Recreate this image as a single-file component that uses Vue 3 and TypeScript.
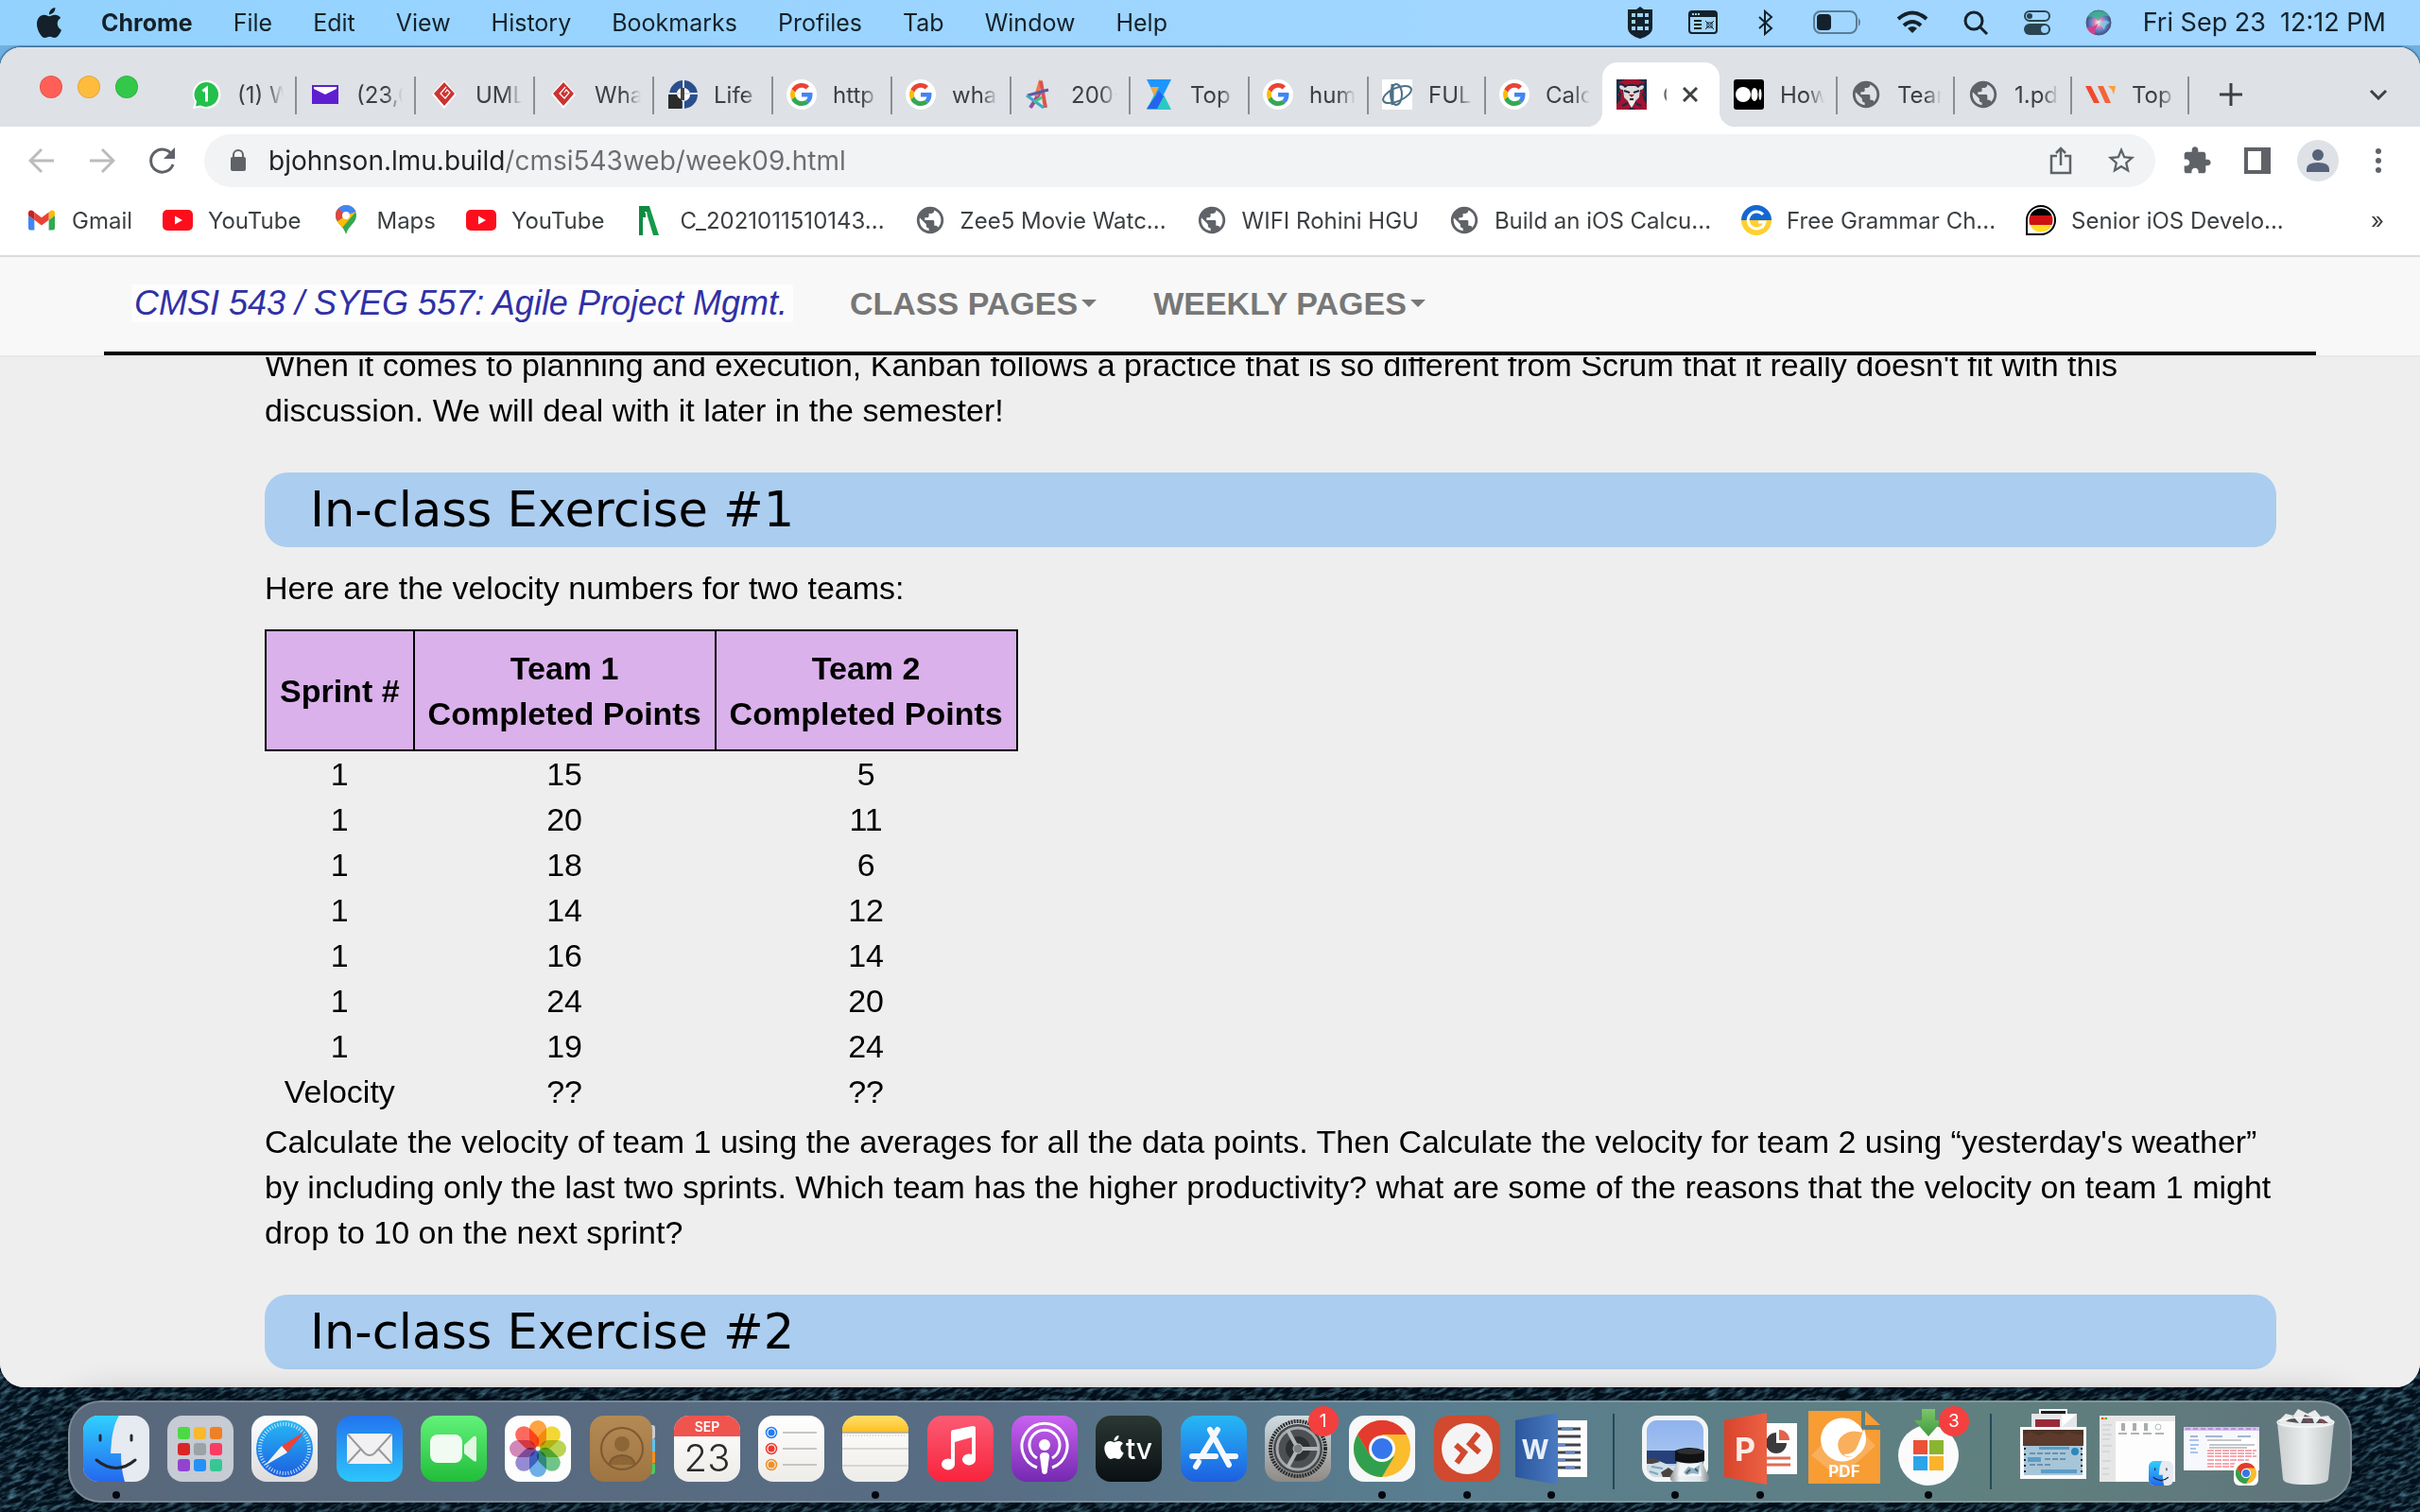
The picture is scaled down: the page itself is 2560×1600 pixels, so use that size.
<script setup lang="ts">
import { ref } from 'vue'

interface Tab { icon: string; title: string; narrow?: boolean; active?: boolean }
interface Bookmark { icon: string; label: string }
interface Glyph { text: string; x: number; y: number; size: number; weight: number; color: string }
interface DockItem { icon: string; name: string; running?: boolean; badge?: string; glyphs?: Glyph[] }

const menus: string[] = ['File', 'Edit', 'View', 'History', 'Bookmarks', 'Profiles', 'Tab', 'Window', 'Help']

const tabs: Tab[] = [
  { icon: 'whatsapp', title: '(1) W' },
  { icon: 'yahoo', title: '(23,0' },
  { icon: 'diamond', title: 'UML' },
  { icon: 'diamond', title: 'Wha' },
  { icon: 'life', title: 'Life' },
  { icon: 'google', title: 'http' },
  { icon: 'google', title: 'wha' },
  { icon: 'star-a', title: '200-' },
  { icon: 'hourglass', title: 'Top' },
  { icon: 'google', title: 'hum' },
  { icon: 'orbit', title: 'FUL', narrow: true },
  { icon: 'google', title: 'Calc', narrow: true },
  { icon: 'lion', title: 'C', narrow: true, active: true },
  { icon: 'medium', title: 'How', narrow: true },
  { icon: 'globe', title: 'Team', narrow: true },
  { icon: 'globe', title: '1.pdf', narrow: true },
  { icon: 'wstripes', title: 'Top', narrow: true },
]

const bookmarks: Bookmark[] = [
  { icon: 'gmail', label: 'Gmail' },
  { icon: 'youtube', label: 'YouTube' },
  { icon: 'maps', label: 'Maps' },
  { icon: 'youtube', label: 'YouTube' },
  { icon: 'n-green', label: 'C_2021011510143...' },
  { icon: 'globe', label: 'Zee5 Movie Watc...' },
  { icon: 'globe', label: 'WIFI Rohini HGU' },
  { icon: 'globe', label: 'Build an iOS Calcu...' },
  { icon: 'grammar', label: 'Free Grammar Ch...' },
  { icon: 'german', label: 'Senior iOS Develo...' },
]

const dockGroups: DockItem[][] = [
  [
    { icon: 'finder', name: 'Finder', running: true },
    { icon: 'launchpad', name: 'Launchpad' },
    { icon: 'safari', name: 'Safari' },
    { icon: 'mail', name: 'Mail' },
    { icon: 'facetime', name: 'FaceTime' },
    { icon: 'photos', name: 'Photos' },
    { icon: 'contacts', name: 'Contacts' },
    {
      icon: 'calendar',
      name: 'Calendar',
      glyphs: [
        { text: 'SEP', x: 35, y: 17, size: 14, weight: 600, color: '#fff' },
        { text: '23', x: 35, y: 59, size: 40, weight: 300, color: '#2a2a2a' },
      ],
    },
    { icon: 'reminders', name: 'Reminders' },
    { icon: 'notes', name: 'Notes', running: true },
    { icon: 'music', name: 'Music' },
    { icon: 'podcasts', name: 'Podcasts' },
    { icon: 'tv', name: 'TV', glyphs: [{ text: 'tv', x: 46, y: 46, size: 30, weight: 500, color: '#fff' }] },
    { icon: 'appstore', name: 'App Store' },
    { icon: 'settings', name: 'System Preferences', badge: '1' },
    { icon: 'chrome', name: 'Chrome', running: true },
    { icon: 'remote', name: 'Remote Desktop', running: true },
    { icon: 'word', name: 'Word', running: true, glyphs: [{ text: 'W', x: 18, y: 46, size: 28, weight: 700, color: '#e6effc' }] },
  ],
  [
    { icon: 'preview', name: 'Preview', running: true },
    { icon: 'powerpoint', name: 'PowerPoint', running: true, glyphs: [{ text: 'P', x: 19, y: 48, size: 34, weight: 700, color: '#fdebe5' }] },
    { icon: 'pdf', name: 'PDF Reader', glyphs: [{ text: 'PDF', x: 35, y: 65, size: 17, weight: 700, color: '#fff' }] },
    { icon: 'autoupdate', name: 'AutoUpdate', running: true, badge: '3' },
  ],
  [
    { icon: 'stack', name: 'Downloads' },
    { icon: 'win-finder', name: 'Finder window' },
    { icon: 'win-chrome', name: 'Chrome window' },
    { icon: 'trash', name: 'Trash' },
  ],
]

const velocities: [string, string, string][] = [
  ['1', '15', '5'],
  ['1', '20', '11'],
  ['1', '18', '6'],
  ['1', '14', '12'],
  ['1', '16', '14'],
  ['1', '24', '20'],
  ['1', '19', '24'],
  ['Velocity', '??', '??'],
]

const petals: { angle: number; color: string }[] = [
  { angle: 0, color: '#ff9a2e' },
  { angle: 45, color: '#f4d51e' },
  { angle: 90, color: '#b4d242' },
  { angle: 135, color: '#63c07c' },
  { angle: 180, color: '#5ea9e6' },
  { angle: 225, color: '#8a7fd0' },
  { angle: 270, color: '#d07bb4' },
  { angle: 315, color: '#ff5a4d' },
]

const address = ref('bjohnson.lmu.build/cmsi543web/week09.html')
</script>

<template>
  <div class="desktop">
    <svg class="wallpaper" aria-hidden="true">
      <defs>
        <filter id="water" x="0" y="0" width="100%" height="100%">
          <feTurbulence type="fractalNoise" baseFrequency="0.08 0.28" numOctaves="4" seed="7" />
          <feColorMatrix type="matrix" values="0 0 0 0 0.1  0 0 0 0 0.28  0 0 0 0 0.38  2 0 0 0 -0.85" />
        </filter>
      </defs>
      <g transform="rotate(-24 1280 1540)">
        <rect x="-200" y="600" width="3000" height="1800" filter="url(#water)" />
      </g>
    </svg>

    <svg class="symbols" aria-hidden="true">
      <defs>
        <linearGradient id="gBlue" x1="0" y1="0" x2="0" y2="1"><stop offset="0" stop-color="#2fd0ff" /><stop offset="1" stop-color="#2468ee" /></linearGradient>
        <linearGradient id="gMail" x1="0" y1="0" x2="0" y2="1"><stop offset="0" stop-color="#2374ee" /><stop offset="1" stop-color="#2cc6fb" /></linearGradient>
        <linearGradient id="gGreen" x1="0" y1="0" x2="0" y2="1"><stop offset="0" stop-color="#62f27a" /><stop offset="1" stop-color="#21bd3a" /></linearGradient>
        <linearGradient id="gWhite" x1="0" y1="0" x2="0" y2="1"><stop offset="0" stop-color="#ffffff" /><stop offset="1" stop-color="#dcdcdc" /></linearGradient>
        <linearGradient id="gPaper" x1="0" y1="0" x2="0" y2="1"><stop offset="0" stop-color="#ffffff" /><stop offset="1" stop-color="#eeece8" /></linearGradient>
        <linearGradient id="gBrown" x1="0" y1="0" x2="0" y2="1"><stop offset="0" stop-color="#b48a54" /><stop offset="1" stop-color="#9e7442" /></linearGradient>
        <linearGradient id="gRed" x1="0" y1="0" x2="0" y2="1"><stop offset="0" stop-color="#fb5b74" /><stop offset="1" stop-color="#f8243c" /></linearGradient>
        <linearGradient id="gPurple" x1="0" y1="0" x2="0" y2="1"><stop offset="0" stop-color="#c862f0" /><stop offset="1" stop-color="#7429b0" /></linearGradient>
        <linearGradient id="gDark" x1="0" y1="0" x2="0" y2="1"><stop offset="0" stop-color="#2a3833" /><stop offset="1" stop-color="#0b0f12" /></linearGradient>
        <linearGradient id="gStore" x1="0" y1="0" x2="0" y2="1"><stop offset="0" stop-color="#26b8f5" /><stop offset="1" stop-color="#1d5fe0" /></linearGradient>
        <linearGradient id="gGray" x1="0" y1="0" x2="0" y2="1"><stop offset="0" stop-color="#cfdde4" /><stop offset="1" stop-color="#8f8a86" /></linearGradient>
        <linearGradient id="gYellow" x1="0" y1="0" x2="0" y2="1"><stop offset="0" stop-color="#ffdf6a" /><stop offset="1" stop-color="#fdbf22" /></linearGradient>
        <linearGradient id="gWord" x1="0" y1="0" x2="1" y2="0"><stop offset="0" stop-color="#2a569c" /><stop offset="1" stop-color="#4a7ac0" /></linearGradient>
        <linearGradient id="gPpt" x1="0" y1="0" x2="1" y2="0"><stop offset="0" stop-color="#d9442b" /><stop offset="1" stop-color="#ec6144" /></linearGradient>
        <linearGradient id="gSky" x1="0" y1="0" x2="0" y2="1"><stop offset="0" stop-color="#8fb2ee" /><stop offset="1" stop-color="#b4d0f2" /></linearGradient>
        <linearGradient id="gTrash" x1="0" y1="0" x2="1" y2="0"><stop offset="0" stop-color="#cfd3d4" /><stop offset="0.5" stop-color="#f3f4f4" /><stop offset="1" stop-color="#c5cacb" /></linearGradient>
        <linearGradient id="gArrow" x1="0" y1="0" x2="0" y2="1"><stop offset="0" stop-color="#7cc66a" /><stop offset="1" stop-color="#3f9a3c" /></linearGradient>
        <linearGradient id="gJar" x1="0" y1="0" x2="1" y2="0"><stop offset="0" stop-color="#8d9396" /><stop offset="0.25" stop-color="#eef1f2" /><stop offset="0.75" stop-color="#dfe6ea" /><stop offset="1" stop-color="#7e8487" /></linearGradient>
        <radialGradient id="gSiri"><stop offset="0" stop-color="#ffffff" /><stop offset="0.35" stop-color="#e27fb4" /><stop offset="0.7" stop-color="#4f7fc4" /><stop offset="1" stop-color="#4a4a86" /></radialGradient>
      </defs>

      <!-- favicons, 32 units square -->
      <symbol id="globe" viewBox="0 0 32 32"><path transform="translate(-1 -1) scale(1.42)" fill="#5f6368" d="M12 2C6.480 2 2 6.480 2 12s4.480 10 10 10 10-4.480 10-10S17.520 2 12 2zm-1 17.930c-3.950-.490-7-3.850-7-7.930 0-.620.080-1.210.210-1.790L9 15v1c0 1.100.900 2 2 2v1.930zm6.900-2.540c-.260-.810-1-1.390-1.900-1.390h-1v-3c0-.550-.450-1-1-1H8v-2h2c.550 0 1-.450 1-1V7h2c1.100 0 2-.900 2-2v-.410c2.930 1.190 5 4.060 5 7.410 0 2.080-.800 3.970-2.100 5.390z" /></symbol>
      <symbol id="google" viewBox="0 0 32 32">
        <circle cx="16" cy="16" r="16" fill="#fff" />
        <g transform="translate(4 4) scale(0.5)">
          <path fill="#EA4335" d="M24 9.500c3.540 0 6.710 1.220 9.210 3.600l6.850-6.850C35.900 2.380 30.470 0 24 0 14.620 0 6.510 5.380 2.560 13.220l7.980 6.190C12.430 13.720 17.740 9.500 24 9.500z" />
          <path fill="#4285F4" d="M46.980 24.550c0-1.570-.150-3.090-.380-4.550H24v9.020h12.940c-.580 2.960-2.260 5.480-4.780 7.180l7.730 6c4.510-4.180 7.090-10.360 7.090-17.650z" />
          <path fill="#FBBC05" d="M10.530 28.590c-.480-1.450-.760-2.990-.760-4.590s.270-3.140.760-4.590l-7.980-6.190C.920 16.460 0 20.120 0 24c0 3.880.920 7.540 2.560 10.780l7.970-6.190z" />
          <path fill="#34A853" d="M24 48c6.480 0 11.930-2.130 15.890-5.810l-7.730-6c-2.150 1.450-4.920 2.300-8.160 2.300-6.260 0-11.570-4.220-13.470-9.910l-7.980 6.190C6.510 42.620 14.620 48 24 48z" />
        </g>
      </symbol>
      <symbol id="whatsapp" viewBox="0 0 32 32">
        <path d="M16 1a15 15 0 1 1-6 28.500L2 31l2-7A15 15 0 0 1 16 1z" fill="#fff" />
        <path d="M16 3a13 13 0 1 1-6 24.500L5 28.500l1-5A13 13 0 0 1 16 3z" fill="#23c04b" />
        <path d="M12.500 12.500l4-3v14" fill="none" stroke="#fff" stroke-width="3" />
      </symbol>
      <symbol id="yahoo" viewBox="0 0 32 32"><path d="M2 6h28v20H2z" fill="#5f1ed0" /><path d="M4 8h24v2l-6 3-6 3-6-3-6-3z" fill="#fff" /></symbol>
      <symbol id="diamond" viewBox="0 0 32 32">
        <path d="M16 1l13 15-13 15L3 16z" fill="#fff" />
        <path d="M16 3l11 12-11 14L5 15z" fill="#cc3333" />
        <path d="M18 8l-6 7 5 5 5-6-3-3-2 3M7 19l9 10 9-10" fill="none" stroke="#fff" stroke-width="1.200" />
      </symbol>
      <symbol id="life" viewBox="0 0 32 32">
        <circle cx="17" cy="16" r="11" fill="#fff" stroke="#2a4f8e" stroke-width="8" />
        <path d="M1 16h14v15H1z" fill="#2b2b2b" /><circle cx="16" cy="15" r="6" fill="#fff" />
        <path d="M17 0v32M0 15h32" stroke="#dee1e6" stroke-width="2" />
        <path d="M16 9v13" stroke="#444" stroke-width="4" />
      </symbol>
      <symbol id="star-a" viewBox="0 0 32 32">
        <path d="M6 30L16 14" stroke="#9a4ba0" stroke-width="4" /><path d="M12 18L17 1" stroke="#ee7a4b" stroke-width="4" />
        <path d="M17 2l5 28" stroke="#d9564c" stroke-width="4" /><path d="M3 17l22-6" stroke="#5b5aa8" stroke-width="3" />
        <path d="M2 17l18 13" stroke="#3aa9c9" stroke-width="3" /><path d="M10 24l8-5" stroke="#4bc47c" stroke-width="3" />
      </symbol>
      <symbol id="hourglass" viewBox="0 0 32 32">
        <path d="M3 0h26l-8 16H11z" fill="#1e96ff" /><path d="M7 8h9l-5 10z" fill="#f5a742" />
        <path d="M11 16h10l8 16H3z" fill="#2bc9c4" /><path d="M16 12l5 6-7 13H3z" fill="#2563ee" />
      </symbol>
      <symbol id="orbit" viewBox="0 0 32 32">
        <path d="M0 0h32v32H0z" fill="#fff" />
        <g fill="none" stroke="#4d7187" stroke-width="2"><ellipse cx="16" cy="16" rx="16" ry="7" transform="rotate(-24 16 16)" /><ellipse cx="15" cy="16" rx="6" ry="11" /><path d="M11 5v22" stroke-width="3" /></g>
      </symbol>
      <symbol id="lion" viewBox="0 0 32 32">
        <path d="M0 0h32v32H0z" fill="#14304a" />
        <path d="M2 3l8-3h12l8 3-4 5 5 8-3 4 4 6v6H20l-4-3-4 3H0v-6l5-5-4-5 4-8z" fill="#a3122f" />
        <path d="M0 10l4 6-2 6M32 10l-4 6 3 6M6 28l6-3M26 28l-6-3" fill="none" stroke="#14304a" stroke-width="2" />
        <path d="M3 5q3-2 6 1l7-1 7 1q3-3 6-1 2 4-3 5l-2 9-4 4-4 7-4-7-4-4-2-9Q1 9 3 5z" fill="#1a2740" />
        <path d="M3 7q3-2 6 2l3-2h8l3 2q3-4 6-2 0 4-4 4l-1 8-4 4h-8l-4-4-1-8Q3 11 3 7z" fill="#dedcda" />
        <path d="M8 12l6 2M24 12l-6 2M14 21h4" stroke="#1a2740" stroke-width="2" /><path d="M13 16h6l-3 3z" fill="#a3122f" /><path d="M12 23h8l-2 4-2 3-2-3z" fill="#f2f0ee" />
      </symbol>
      <symbol id="medium" viewBox="0 0 32 32"><rect width="32" height="32" rx="3" fill="#000" /><circle cx="10" cy="16" r="8" fill="#fff" /><ellipse cx="22" cy="16" rx="3.500" ry="7" fill="#fff" /><ellipse cx="28" cy="16" rx="1.500" ry="6" fill="#fff" /></symbol>
      <symbol id="wstripes" viewBox="0 0 32 32"><path d="M0 7h6l9 18H9z" fill="#ee4a2c" /><path d="M13 7h6l8 18h-6z" fill="#f2643a" /><path d="M24 7h8l-2 9-2-5z" fill="#f6a13c" /></symbol>
      <symbol id="gmail" viewBox="52 42 88 66">
        <path fill="#4285f4" d="M58 108h14V74L52 59v43c0 3.320 2.690 6 6 6" /><path fill="#34a853" d="M120 108h14c3.320 0 6-2.690 6-6V59l-20 15" />
        <path fill="#fbbc04" d="M120 48v26l20-15v-8c0-7.420-8.470-11.650-14.400-7.200" /><path fill="#ea4335" d="M72 74V48l24 18 24-18v26L96 92" />
        <path fill="#c5221f" d="M52 51v8l20 15V48l-5.600-4.200c-5.940-4.450-14.400-.220-14.400 7.200" />
      </symbol>
      <symbol id="youtube" viewBox="0 0 32 32"><rect y="5" width="32" height="22" rx="5" fill="#fe0d1c" /><path d="M13 11.500l8 4.500-8 4.500z" fill="#fff" /></symbol>
      <symbol id="maps" viewBox="0 0 32 32">
        <path d="M16 0c6 0 11 5 11 11 0 8-8 10-11 20C13 21 5 19 5 11 5 5 10 0 16 0z" fill="#34a853" />
        <path d="M16 0c5 0 9 3 10.500 7L12 24C8 19 5 17 5 11 5 5 10 0 16 0z" fill="#fbbc04" />
        <path d="M16 0c5 0 9 3 10.500 7L16 11l-9 6c-1.500-2-2-4-2-6C5 5 10 0 16 0z" fill="#4285f4" />
        <path d="M8 3.500L16 11l-9 6C5 14 4 8 8 3.500z" fill="#ea4335" /><circle cx="16" cy="11" r="4" fill="#fff" />
      </symbol>
      <symbol id="n-green" viewBox="0 0 32 32"><path d="M5 32V1h2l5 8v4H9v19z" fill="#118a43" /><path d="M12 1h4l10 31h-6L14 12z" fill="#159a4a" /><path d="M5 1h11v6H5z" fill="#118a43" /></symbol>
      <symbol id="grammar" viewBox="0 0 32 32"><path d="M0 16a16 16 0 0 1 32 0z" fill="#1268d3" /><path d="M0 16a16 16 0 0 0 32 0z" fill="#ffd02f" /><path d="M23 10a9 9 0 1 0 2 8h-7M22 24l3-6" fill="none" stroke="#fff" stroke-width="3" /></symbol>
      <symbol id="german" viewBox="0 0 32 32">
        <path d="M16 1a15 15 0 1 1 0 30H1V16A15 15 0 0 1 16 1z" fill="#fff" stroke="#000" stroke-width="2" />
        <path d="M4.500 11a12.500 12.500 0 0 1 23 0z" fill="#000" /><path d="M4.500 11h23q2 5 0 10h-23q-2-5 0-10z" fill="#cc1212" /><path d="M4.500 21a12.500 12.500 0 0 0 23 0z" fill="#ffdd22" />
      </symbol>

      <!-- dock icons, 70 units square -->
      <symbol id="finder" viewBox="0 0 70 70" overflow="visible">
        <rect width="70" height="70" rx="16" fill="#e6eaf1" />
        <path d="M16 0h22c-6 10-8 22-9 40h11c0 11 1 20 4 30H16A16 16 0 0 1 0 54V16A16 16 0 0 1 16 0z" fill="url(#gBlue)" />
        <path d="M18 21v5M51 21v5M14 47q21 17 41 0" fill="none" stroke="#22262e" stroke-width="3" stroke-linecap="round" />
      </symbol>
      <symbol id="launchpad" viewBox="0 0 70 70">
        <rect width="70" height="70" rx="16" fill="#c6cbd4" />
        <rect x="11" y="12" width="13" height="13" rx="3" fill="#4bd944" /><rect x="28" y="12" width="13" height="13" rx="3" fill="#f8b92c" /><rect x="45" y="12" width="13" height="13" rx="3" fill="#ef8024" />
        <rect x="11" y="29" width="13" height="13" rx="3" fill="#d92525" /><rect x="28" y="29" width="13" height="13" rx="3" fill="#9aa3a7" /><rect x="45" y="29" width="13" height="13" rx="3" fill="#fb3c62" />
        <rect x="11" y="46" width="13" height="13" rx="3" fill="#9243cf" /><rect x="28" y="46" width="13" height="13" rx="3" fill="#2590f5" /><rect x="45" y="46" width="13" height="13" rx="3" fill="#36c795" />
      </symbol>
      <symbol id="safari" viewBox="0 0 70 70">
        <rect width="70" height="70" rx="16" fill="url(#gWhite)" /><circle cx="35" cy="35" r="30" fill="url(#gStore)" />
        <circle cx="35" cy="35" r="26" fill="none" stroke="#cfe6fb" stroke-width="4" stroke-dasharray="1 2" />
        <path d="M56 17L38 39l-6-7z" fill="#ee4137" /><path d="M14 53l18-21 6 7z" fill="#f4f4f4" />
      </symbol>
      <symbol id="mail" viewBox="0 0 70 70">
        <rect width="70" height="70" rx="16" fill="url(#gMail)" /><rect x="11" y="19" width="48" height="32" rx="3" fill="#f1f1f2" />
        <path d="M12 20l18 20q5 4 10 0l18-20M12 50l14-15M58 50L44 35" fill="none" stroke="#97999d" stroke-width="2" />
      </symbol>
      <symbol id="facetime" viewBox="0 0 70 70"><rect width="70" height="70" rx="16" fill="url(#gGreen)" /><rect x="10" y="20" width="34" height="30" rx="8" fill="#f1fbf1" /><path d="M46 31l10-9q3-1 3 2v23q0 3-3 1l-10-8z" fill="#e2f6e3" /></symbol>
      <symbol id="contacts" viewBox="0 0 70 70">
        <rect x="54" y="10" width="15" height="15" rx="3" fill="#c9cdd0" /><rect x="54" y="25" width="15" height="14" fill="#5cc4f3" /><rect x="54" y="38" width="15" height="12" fill="#f68e1e" /><rect x="54" y="50" width="15" height="12" rx="3" fill="#45ce5c" />
        <rect width="66" height="70" rx="15" fill="url(#gBrown)" /><g fill="none" stroke="#7d5a30" stroke-width="2"><circle cx="34" cy="35" r="22" /><path d="M20 52q3-10 14-10t14 10" fill="#8c6636" /></g><circle cx="34" cy="30" r="8" fill="#8c6636" />
      </symbol>
      <symbol id="calendar" viewBox="0 0 70 70">
        <rect width="70" height="70" rx="16" fill="url(#gPaper)" /><path d="M0 22v-6A16 16 0 0 1 16 0h38a16 16 0 0 1 16 16v6z" fill="#f0544e" />
      </symbol>
      <symbol id="reminders" viewBox="0 0 70 70">
        <rect width="70" height="70" rx="16" fill="url(#gPaper)" /><path d="M26 18h36M26 35h36M26 52h36" stroke="#b7b7bb" stroke-width="1.500" />
        <g fill="none" stroke-width="1.500"><circle cx="14" cy="18" r="5.500" stroke="#1f7cf2" /><circle cx="14" cy="35" r="5.500" stroke="#ec3b30" /><circle cx="14" cy="52" r="5.500" stroke="#f0902a" /></g>
        <circle cx="14" cy="18" r="3.500" fill="#1f7cf2" /><circle cx="14" cy="35" r="3.500" fill="#ec3b30" /><circle cx="14" cy="52" r="3.500" fill="#f0902a" />
      </symbol>
      <symbol id="notes" viewBox="0 0 70 70">
        <rect width="70" height="70" rx="16" fill="url(#gPaper)" /><path d="M0 18v-2A16 16 0 0 1 16 0h38a16 16 0 0 1 16 16v2z" fill="url(#gYellow)" />
        <path d="M0 18h70" stroke="#a8a49a" stroke-width="1.500" /><path d="M2 21h66" stroke="#b5b3ae" stroke-width="1" stroke-dasharray="1 2" /><path d="M0 35h70M0 53h70" stroke="#cfcdc8" stroke-width="1.500" />
      </symbol>
      <symbol id="music" viewBox="0 0 70 70"><rect width="70" height="70" rx="16" fill="url(#gRed)" /><path d="M25 18q0-3 3-3l20-4q3 0 3 2v33a7 6 0 1 1-4-5V23l-18 5v23a7 6 0 1 1-4-5z" fill="#fff" /></symbol>
      <symbol id="podcasts" viewBox="0 0 70 70">
        <rect width="70" height="70" rx="16" fill="url(#gPurple)" /><g fill="none" stroke="#fff" stroke-width="3"><path d="M27 55a24 24 0 1 1 16 0" /><path d="M27 45a16 16 0 1 1 16 0" /></g>
        <circle cx="35" cy="31" r="6" fill="#fff" /><path d="M30 43q0-4 5-4t5 4l-2 15q0 4-3 4t-3-4z" fill="#fff" />
      </symbol>
      <symbol id="apple" viewBox="0 0 24 24"><path fill="currentColor" d="M12.152 6.896c-.948 0-2.415-1.078-3.960-1.040-2.040.027-3.910 1.183-4.961 3.014-2.117 3.675-.546 9.103 1.519 12.090 1.013 1.454 2.208 3.090 3.792 3.039 1.520-.065 2.090-.987 3.935-.987 1.831 0 2.350.987 3.960.948 1.637-.026 2.676-1.480 3.676-2.948 1.156-1.688 1.636-3.325 1.662-3.415-.039-.013-3.182-1.221-3.220-4.857-.026-3.040 2.480-4.494 2.597-4.559-1.429-2.090-3.623-2.324-4.390-2.376-2-.156-3.675 1.090-4.610 1.090zM15.530 3.830c.843-1.012 1.400-2.427 1.245-3.830-1.207.052-2.662.805-3.532 1.818-.780.896-1.454 2.338-1.273 3.714 1.338.104 2.715-.688 3.559-1.701" /></symbol>
      <symbol id="tv" viewBox="0 0 70 70">
        <rect width="70" height="70" rx="16" fill="url(#gDark)" /><g color="#fff"><use href="#apple" x="7" y="21" width="25" height="25" /></g>
      </symbol>
      <symbol id="appstore" viewBox="0 0 70 70"><rect width="70" height="70" rx="16" fill="url(#gStore)" /><path d="M39 15L22 43M31 15l20 37M12 43h25M47 43h11M19 49l-3 5" stroke="#f4f8fd" stroke-width="6" stroke-linecap="round" /></symbol>
      <symbol id="settings" viewBox="0 0 70 70">
        <rect width="70" height="70" rx="16" fill="url(#gGray)" /><circle cx="35" cy="35" r="29" fill="none" stroke="#2b2b2b" stroke-width="4" stroke-dasharray="2 1" /><circle cx="35" cy="35" r="26" fill="#44484b" />
        <circle cx="35" cy="35" r="22" fill="#4c5052" stroke="#a5a9ab" stroke-width="3" /><circle cx="35" cy="35" r="13" fill="#2e3133" />
        <path d="M35 35h22M35 35L24 15M35 35L24 55" stroke="#b0b4b6" stroke-width="4" /><circle cx="35" cy="35" r="5" fill="#7c8082" stroke="#c0c3c5" />
      </symbol>
      <symbol id="chrome-ball" viewBox="0 0 60 60">
        <circle cx="30" cy="30" r="30" fill="#fbbc2e" />
        <path d="M4 15a30 30 0 0 1 52 0H30L17 37z" fill="#e33b2e" />
        <path d="M4 15a30 30 0 0 0 26 45l13-22-13 5-13-6z" fill="#31a04e" />
        <circle cx="30" cy="30" r="14" fill="#fff" /><circle cx="30" cy="30" r="11" fill="#3577ea" />
      </symbol>
      <symbol id="chrome" viewBox="0 0 70 70"><rect width="70" height="70" rx="16" fill="#f6f7f8" /><use href="#chrome-ball" x="5" y="5" width="60" height="60" /></symbol>
      <symbol id="remote" viewBox="0 0 70 70"><rect width="70" height="70" rx="16" fill="#d1492e" /><circle cx="35" cy="35" r="27" fill="#f4f4f4" /><path d="M23 31l9 8-8 11M47 19l-9 11 10 9" fill="none" stroke="#d1492e" stroke-width="6" /></symbol>
      <symbol id="word" viewBox="0 0 70 70" overflow="visible">
        <rect x="36" y="5" width="37" height="60" fill="#fdfdfd" /><path d="M42 14h24M42 22h24M42 31h24M42 39h24M42 47h24M42 55h24" stroke="#3e434b" stroke-width="3" /><path d="M46 14h12M42 31h8M50 39h10M42 47h8M50 55h10" stroke="#6488c4" stroke-width="3" />
        <path d="M-3 5L42-3v76l-45-8z" fill="url(#gWord)" />
      </symbol>
      <symbol id="preview" viewBox="0 0 70 70" overflow="visible">
        <rect width="70" height="70" rx="16" fill="#f3f4f4" /><rect x="5" y="5" width="60" height="60" rx="11" fill="url(#gSky)" />
        <path d="M5 37h60v14H5z" fill="#27407a" /><path d="M5 46l13 2 12 5h35v2a10 10 0 0 1-10 10H16A11 11 0 0 1 5 54z" fill="#cfdde6" />
        <path d="M5 46l8-1 6 4-8 2H5zM20 60l8-5 8 6-6 4H22z" fill="#4a4440" /><path d="M10 54l12 2M8 59l9 3" stroke="#7fa6bf" stroke-width="2" />
        <path d="M37 47h27q1 8 7 17 1 6-4 6H34q-5 0-4-6 6-9 7-17z" fill="url(#gJar)" /><path d="M41 50h19l3 14H38z" fill="#f2f6f8" /><path d="M44 60l5-6 6 2 6-4-1 10-7-1-6 2z" fill="#8fb0c4" /><path d="M47 61l4-4M56 56l3 3" stroke="#4f5d66" stroke-width="2" />
        <path d="M35 37q16-6 31 0v11q-15 5-31 0z" fill="#111214" /><ellipse cx="51" cy="38" rx="14" ry="3" fill="#2d2f32" />
      </symbol>
      <symbol id="powerpoint" viewBox="0 0 70 70" overflow="visible">
        <rect x="36" y="8" width="38" height="54" fill="#fdfdfd" /><path d="M52 18v11h11a11 11 0 1 1-11-11z" fill="#3b3b3d" /><path d="M55 26V15a11 11 0 0 1 11 11z" fill="#e2634c" /><path d="M42 45h25M42 52h25" stroke="#dd6d58" stroke-width="3" />
        <path d="M-3 5L42-3v76l-45-8z" fill="url(#gPpt)" />
      </symbol>
      <symbol id="pdf" viewBox="0 0 70 70" overflow="visible">
        <path d="M-3-5h56v20h20v57H-3z" fill="#f89c34" /><path d="M57-5l16 15H57z" fill="#f89c34" /><path d="M0 42L40 2l28 30-38 34z" fill="#fff" opacity="0.2" />
        <path d="M48 8a23 23 0 1 0 2 33q-14 7-20-3-6-13 8-20 6-3 17 0-2-7-7-10z" fill="#fff" /><path d="M56 14q6 18-6 27-10 5-16 0 12 0 15-9 4-10 7-18z" fill="#fff" />
      </symbol>
      <symbol id="autoupdate" viewBox="0 0 70 70" overflow="visible">
        <circle cx="35" cy="42" r="32" fill="#fbfbfb" /><path d="M19 26h15v15H19z" fill="#ea5137" /><path d="M36 26h15v15H36z" fill="#8ab52f" /><path d="M19 43h15v15H19z" fill="#2ca4ea" /><path d="M36 43h15v15H36z" fill="#fbb32c" />
        <path d="M28-7h14v12h8L35 22 20 5h8z" fill="url(#gArrow)" />
      </symbol>
      <symbol id="stack" viewBox="0 0 70 70" overflow="visible">
        <rect x="21" y="-6" width="28" height="18" fill="#1d1b1c" stroke="#f4f4f4" stroke-width="2" /><path d="M12-2h48v14H12z" fill="#e5e6e8" /><path d="M16 4h26v9H16z" fill="#9a2a3a" /><path d="M44-2h16l-16 14z" fill="#fff" />
        <path d="M0 12h70v55H0z" fill="#fafafa" /><path d="M3 15h64v17H3z" fill="#4d3226" /><path d="M3 20l8-3 9 4 10-4 12 3 9-3 16 4v11H3z" fill="#5c3a2c" /><path d="M4 32h62v31H4z" fill="#a6c6d8" />
        <path d="M20 33h32v3H20zM8 44h14v5H8zM22 57h38v4H22z" fill="#5b9cc8" /><path d="M10 40h38M10 52h24M26 46h24" stroke="#5a7d9c" stroke-width="1.500" stroke-dasharray="6 2" /><path d="M5 34v28M65 34v28" stroke="#222" stroke-width="2" stroke-dasharray="2 4" /><circle cx="58" cy="38" r="4" fill="#2c86c0" />
      </symbol>
      <symbol id="win-finder" viewBox="0 0 70 70" overflow="visible">
        <path d="M-5 0h80v70H-5z" fill="#fdfdfd" /><path d="M-5 0h17v70H-5zM12 0h63v6H12z" fill="#e6e6e6" />
        <path d="M-3 3h2" stroke="#ee4b45" stroke-width="2" /><path d="M-1 3h2" stroke="#f4b63a" stroke-width="2" /><path d="M1 3h2" stroke="#3bb54a" stroke-width="2" />
        <path d="M-2 10h10M-2 15h8M-2 20h10M-2 25h8M-2 32h10M-2 38h8M-2 48h9M-2 56h7M-2 62h7" stroke="#c3c8cf" stroke-width="1" />
        <path d="M18 8h4v8h-4zM30 8h4v8h-4zM42 8h4v8h-4z" fill="#a8adb0" /><circle cx="57" cy="12" r="3" fill="none" stroke="#b9bcc0" /><path d="M15 19h48" stroke="#9a9a9a" stroke-width="1.500" stroke-dasharray="9 4" />
        <use href="#finder" x="47" y="48" width="26" height="26" />
      </symbol>
      <symbol id="win-chrome" viewBox="0 0 70 70" overflow="visible">
        <path d="M-5 12h80v46H-5z" fill="#f7f8fb" /><path d="M-5 12h80v4H-5z" fill="#d6bdf0" /><path d="M-3 14h74" stroke="#8f66b4" stroke-width="1" stroke-dasharray="5 3" /><path d="M2 22h8M18 22h18M52 22h14" stroke="#8aa0c8" stroke-width="1.500" />
        <path d="M1 26h10M2 31h9M2 35h6M2 39h8" stroke="#a9c3ee" stroke-width="2" /><path d="M20 24h52v33H20z" fill="#fff" /><path d="M20 26h36M22 31h48M22 34h40" stroke="#8a8e96" stroke-width="1" />
        <path d="M20 37h52M20 40h50M20 43h52M20 47h44M20 51h30M20 54h32" stroke="#f58a96" stroke-width="1.500" stroke-dasharray="7 1" />
        <rect x="48" y="48" width="26" height="26" rx="6" fill="#fff" /><use href="#chrome-ball" x="50" y="50" width="22" height="22" />
      </symbol>
      <symbol id="trash" viewBox="0 0 70 70" overflow="visible">
        <path d="M6 6L14-2l8 2 5-7 10 5 8-4 6 7 8-1 6 8-4 5H10z" fill="#e9eaea" /><path d="M14 6l8-5 6 7zM30 8l4-9 8 3 2 6zM46 8l5-6 8 6z" fill="#4d5458" /><path d="M34 2l6 5M50 3l5 5" stroke="#a63f4f" stroke-width="2" />
        <path d="M5 7q30 12 60 0l-6 60q-1 6-24 6t-24-6z" fill="url(#gTrash)" opacity="0.950" /><ellipse cx="35" cy="7" rx="30" ry="5" fill="none" stroke="#f6f7f7" stroke-width="1.500" />
      </symbol>
    </svg>

    <header class="menubar">
      <svg class="menubar-apple" viewBox="0 0 24 24"><use href="#apple" /></svg>
      <strong>Chrome</strong>
      <span v-for="m in menus" :key="m">{{ m }}</span>
      <div class="status">
        <svg width="30" height="34" viewBox="0 0 30 34"><path d="M2 3h9l4-3 4 3h9v20q0 7-13 11Q2 30 2 23z" fill="#14212b" /><path d="M6 7h4v4H6zM12 7h6v4h-6zM20 7h4v4h-4zM6 14h4v4H6zM20 14h4v4h-4zM6 21h4v4H6zM12 21h6v4h-6zM20 21h4v4h-4z" fill="#9bd3fc" /></svg>
        <svg width="32" height="26" viewBox="0 0 32 26"><rect x="1" y="1" width="29" height="23" rx="3" fill="none" stroke="#14212b" stroke-width="2" /><path d="M1 2h29v5H1z" fill="#14212b" /><path d="M6 11h8M6 15h8M6 19h8" stroke="#14212b" stroke-width="2" /><path d="M4 4h8" stroke="#9bd3fc" stroke-width="2" stroke-dasharray="2 1" /><path d="M20 13h5v5h-5zM18 11l9 9M27 11l-9 9" fill="none" stroke="#14212b" /></svg>
        <svg width="28" height="28" viewBox="-4 0 28 28"><path d="M3 8l13 12-7 6V2l7 6L3 20" fill="none" stroke="#14212b" stroke-width="2" /></svg>
        <svg width="52" height="26" viewBox="0 0 52 26"><rect x="1" y="1" width="45" height="23" rx="7" fill="none" stroke="#14212b" stroke-opacity="0.500" stroke-width="2" /><rect x="4" y="4" width="15" height="17" rx="4" fill="#14212b" /><path d="M48 8q4 4 0 9z" fill="#14212b" fill-opacity="0.500" /></svg>
        <svg width="34" height="26" viewBox="0 0 34 26"><g fill="none" stroke="#14212b" stroke-width="4"><path d="M2 9q15-13 30 0" /><path d="M8 16q9-8 18 0" /></g><path d="M12 19q5-4 10 0l-5 5z" fill="#14212b" /></svg>
        <svg width="28" height="28" viewBox="0 0 28 28"><circle cx="12" cy="12" r="9" fill="none" stroke="#14212b" stroke-width="3" /><path d="M18 18l8 8" stroke="#14212b" stroke-width="3" /></svg>
        <svg width="30" height="28" viewBox="0 0 30 28"><rect x="2" y="2" width="26" height="10" rx="5" fill="none" stroke="#2a4350" stroke-width="2" /><circle cx="7" cy="7" r="3" fill="#2a4350" /><rect x="1" y="15" width="28" height="12" rx="6" fill="#2a4350" /><circle cx="23" cy="21" r="4" fill="#9bd3fc" /></svg>
        <svg width="28" height="28" viewBox="0 0 28 28"><circle cx="14" cy="14" r="13" fill="url(#gSiri)" stroke="#4a5a78" /><path d="M2 8A14 14 0 0 1 26 8q-8-4-12 4Q8 6 2 8z" fill="#3fb98c" opacity="0.800" /><path d="M1 18q8 2 13-4-6 10-3 13Q3 25 1 18z" fill="#d43f8d" /><path d="M14 14q8-5 12 0-5 1-6 8z" fill="#7fd8e8" opacity="0.700" /></svg>
      </div>
      <time>Fri Sep 23&nbsp; 12:12 PM</time>
    </header>

    <section class="window">
      <div class="tabstrip">
        <div class="lights"><i class="close" /><i class="minimise" /><i class="zoom" /></div>
        <button v-for="(t, i) in tabs" :key="i" type="button" class="tab" :class="{ narrow: t.narrow, active: t.active, bare: t.active || tabs[i + 1]?.active }">
          <svg class="favicon"><use :href="'#' + t.icon" /></svg>
          <span class="tab-title">{{ t.title }}</span>
          <svg v-if="t.active" class="tab-close" viewBox="0 0 16 16"><path d="M1 1l14 14M15 1L1 15" stroke="#3c4043" stroke-width="3" /></svg>
        </button>
        <button type="button" class="new-tab" aria-label="New tab"><svg width="24" height="24" viewBox="0 0 24 24"><path d="M12 0v24M0 12h24" stroke="#3c4043" stroke-width="3" /></svg></button>
        <button type="button" class="tab-search" aria-label="Search tabs"><svg width="20" height="12" viewBox="0 0 20 12"><path d="M2 2l8 8 8-8" fill="none" stroke="#3c4043" stroke-width="3" /></svg></button>
      </div>

      <div class="toolbar">
        <button type="button" aria-label="Back"><svg width="28" height="28" viewBox="0 0 28 28"><path d="M27 14H3M14 2L2 14l12 12" fill="none" stroke="#babcbe" stroke-width="3" /></svg></button>
        <button type="button" aria-label="Forward"><svg width="28" height="28" viewBox="0 0 28 28"><path d="M1 14h24M14 2l12 12-12 12" fill="none" stroke="#babcbe" stroke-width="3" /></svg></button>
        <button type="button" aria-label="Reload"><svg width="28" height="28" viewBox="0 0 28 28"><path d="M24 8A12 12 0 1 0 25 18" fill="none" stroke="#5f6368" stroke-width="3" /><path d="M27 0v12H15z" fill="#5f6368" /></svg></button>
        <label class="omnibox">
          <svg width="18" height="24" viewBox="0 0 18 24"><path d="M4 9V6a5 5 0 0 1 10 0v3" fill="none" stroke="#5f6368" stroke-width="2" /><rect x="1" y="8" width="16" height="15" rx="2" fill="#5f6368" /></svg>
          <input v-model="address" type="text" aria-label="Address" spellcheck="false" />
          <svg width="24" height="30" viewBox="0 0 24 30"><path d="M8 10H2v18h20V10h-6M12 20V3M7 7l5-5 5 5" fill="none" stroke="#5f6368" stroke-width="2.500" /></svg>
          <svg width="34" height="34" viewBox="0 0 24 24"><path fill="#5f6368" d="M22 9.240l-7.190-.620L12 2 9.190 8.630 2 9.240l5.460 4.730L5.820 21 12 17.270 18.180 21l-1.630-7.030L22 9.240zM12 15.400l-3.760 2.270 1-4.280-3.320-2.880 4.380-.380L12 6.100l1.710 4.040 4.380.380-3.320 2.880 1 4.280L12 15.400z" /></svg>
        </label>
        <button type="button" aria-label="Extensions"><svg width="32" height="32" viewBox="0 0 24 24"><path fill="#5f6368" d="M20.500 11H19V7c0-1.100-.900-2-2-2h-4V3.500C13 2.120 11.880 1 10.500 1S8 2.120 8 3.500V5H4c-1.100 0-1.990.900-1.990 2v3.800H3.500c1.490 0 2.700 1.210 2.700 2.700s-1.210 2.700-2.700 2.700H2V20c0 1.100.900 2 2 2h3.800v-1.500c0-1.490 1.210-2.700 2.700-2.700 1.490 0 2.700 1.210 2.700 2.700V22H17c1.100 0 2-.900 2-2v-4h1.500c1.380 0 2.500-1.120 2.500-2.500S21.880 11 20.500 11z" /></svg></button>
        <button type="button" aria-label="Side panel"><svg width="28" height="28" viewBox="0 0 28 28"><path d="M0 0h28v28H0zM4 4v20h14V4z" fill="#5f6368" fill-rule="evenodd" /></svg></button>
        <button type="button" aria-label="Profile"><svg width="44" height="44" viewBox="0 0 44 44"><circle cx="22" cy="22" r="22" fill="#dee1e6" /><circle cx="22" cy="16" r="6" fill="#56637a" /><path d="M10 34v-3q0-7 12-7t12 7v3z" fill="#56637a" /></svg></button>
        <button type="button" aria-label="Menu"><svg width="8" height="28" viewBox="0 0 8 28"><circle cx="4" cy="4" r="3" fill="#5f6368" /><circle cx="4" cy="14" r="3" fill="#5f6368" /><circle cx="4" cy="24" r="3" fill="#5f6368" /></svg></button>
      </div>

      <nav class="bookmarks">
        <a v-for="(b, i) in bookmarks" :key="i" href="#"><svg class="favicon" :class="'mark-' + b.icon"><use :href="'#' + b.icon" /></svg>{{ b.label }}</a>
        <button type="button" class="overflow" aria-label="More bookmarks">»</button>
      </nav>

      <main class="page">
        <div class="site-nav">
          <div class="site-nav-inner">
            <a class="brand" href="#">CMSI 543 / SYEG 557: Agile Project Mgmt.</a>
            <button type="button" class="dropdown">CLASS PAGES</button>
            <button type="button" class="dropdown">WEEKLY PAGES</button>
          </div>
        </div>
        <article>
          <p>When it comes to planning and execution, Kanban follows a practice that is so different from Scrum that it really doesn't fit with this discussion. We will deal with it later in the semester!</p>
          <h2>In-class Exercise #1</h2>
          <p>Here are the velocity numbers for two teams:</p>
          <table>
            <thead>
              <tr><th>Sprint #</th><th>Team 1<br />Completed Points</th><th>Team 2<br />Completed Points</th></tr>
            </thead>
            <tbody>
              <tr v-for="(row, i) in velocities" :key="i"><td v-for="(cell, j) in row" :key="j">{{ cell }}</td></tr>
            </tbody>
          </table>
          <p>Calculate the velocity of team 1 using the averages for all the data points. Then Calculate the velocity for team 2 using “yesterday's weather” by including only the last two sprints. Which team has the higher productivity? what are some of the reasons that the velocity on team 1 might drop to 10 on the next sprint?</p>
          <h2>In-class Exercise #2</h2>
        </article>
      </main>
    </section>

    <footer class="dock">
      <template v-for="(group, g) in dockGroups" :key="g">
        <i v-if="g > 0" class="divider" />
        <button v-for="item in group" :key="item.name" type="button" class="tile" :class="{ running: item.running }" :aria-label="item.name">
          <svg v-if="item.icon === 'photos'" class="dock-icon" viewBox="0 0 70 70">
            <rect width="70" height="70" rx="16" fill="#fdfdfd" />
            <g class="petals"><rect v-for="p in petals" :key="p.angle" x="26" y="5" width="18" height="28" rx="9" :fill="p.color" opacity="0.900" :transform="`rotate(${p.angle} 35 35)`" /></g>
            <circle cx="35" cy="35" r="2" fill="#fff" />
          </svg>
          <svg v-else class="dock-icon" viewBox="0 0 70 70">
            <use :href="'#' + item.icon" width="70" height="70" />
            <text v-for="n in item.glyphs" :key="n.text" :x="n.x" :y="n.y" :font-size="n.size" :font-weight="n.weight" :fill="n.color" text-anchor="middle">{{ n.text }}</text>
          </svg>
          <span v-if="item.badge" class="badge">{{ item.badge }}</span>
        </button>
      </template>
    </footer>
  </div>
</template>

<style>
body {
  overflow: hidden;
}
</style>

<style scoped>
.desktop {
  position: relative;
  display: flex;
  flex-direction: column;
  height: 100vh;
  overflow: hidden;
  background: linear-gradient(#6fb1e2, #5b9fd0 40%, #03101c 85%);
  font-family: Inter, "Liberation Sans", sans-serif;
}
.desktop * {
  box-sizing: border-box;
}
.wallpaper {
  position: absolute;
  inset: auto 0 0 0;
  width: 100%;
  height: 100%;
  clip-path: inset(80% 0 0 0);
}
.symbols {
  position: absolute;
  width: 0;
  height: 0;
}
svg {
  flex: none;
}
button {
  display: flex;
  align-items: center;
  border: 0;
  padding: 0;
  background: none;
  color: inherit;
  font: inherit;
}

/* menu bar */
.menubar {
  position: relative;
  display: flex;
  flex: none;
  align-items: center;
  gap: 43px;
  height: 48px;
  padding: 0 36px;
  background: linear-gradient(90deg, #93d2fe, #a0d6ff 60%);
  color: #14212b;
  font-size: 25px;
  line-height: 46px;
}
.menubar-apple {
  width: 32px;
  height: 32px;
  margin-right: -4px;
}
.menubar time {
  margin-left: -10px;
  font-size: 27px;
}
.status {
  display: flex;
  align-items: center;
  gap: 36px;
  margin-left: auto;
}

/* browser window */
.window {
  position: relative;
  display: flex;
  flex: 1;
  flex-direction: column;
  min-height: 0;
  margin: 2px 0 14px;
  overflow: hidden;
  border-radius: 22px 22px 26px 26px;
  background: #fff;
  box-shadow: 0 0 2px 1px rgba(0, 20, 40, 0.6);
  color: #3c4043;
  font-size: 24px;
}
.tabstrip {
  display: flex;
  flex: none;
  align-items: flex-end;
  height: 84px;
  background: #dee1e6;
}
.lights {
  display: flex;
  flex: none;
  align-self: center;
  gap: 16px;
  width: 187px;
  padding-left: 42px;
}
.lights i {
  width: 24px;
  height: 24px;
  border: 1px solid rgba(0, 0, 0, 0.1);
  border-radius: 50%;
}
.close { background: #ff5f57; }
.minimise { background: #febc3f; }
.zoom { background: #34c84a; }
.tab {
  position: relative;
  flex: 0 1 126px;
  gap: 17px;
  min-width: 0;
  height: 68px;
  padding: 0 13px 0 15px;
}
.tab.narrow {
  flex-basis: 124px;
}
.tab::after {
  position: absolute;
  top: 15px;
  right: -1px;
  width: 2px;
  height: 40px;
  background: #8b8e92;
  content: "";
}
.tab.bare::after {
  display: none;
}
.tab.active {
  border-radius: 16px 16px 0 0;
  background: #fff;
}
.tab.active::before {
  position: absolute;
  right: -16px;
  bottom: 0;
  left: -16px;
  height: 16px;
  background:
    radial-gradient(circle at 0 0, transparent 16px, #fff 16px) 0 0 / 16px 16px no-repeat,
    radial-gradient(circle at 16px 0, transparent 16px, #fff 16px) 100% 0 / 16px 16px no-repeat;
  content: "";
}
.favicon {
  width: 32px;
  height: 32px;
}
.tab-title {
  flex: 1;
  min-width: 0;
  overflow: hidden;
  text-align: left;
  white-space: nowrap;
  mask-image: linear-gradient(90deg, #000 calc(100% - 18px), transparent);
}
.tab.active .tab-title {
  mask-image: linear-gradient(90deg, #000, transparent 12px);
}
.tab-close {
  width: 16px;
  height: 16px;
  margin-right: 10px;
}
.new-tab {
  align-self: flex-end;
  height: 68px;
  margin-left: 33px;
}
.tab-search {
  height: 68px;
  margin: 0 34px 0 auto;
}

/* toolbar */
.toolbar {
  display: flex;
  flex: none;
  align-items: center;
  height: 72px;
  padding: 0 12px;
}
.toolbar button {
  flex: none;
  justify-content: center;
  width: 64px;
}
.omnibox {
  display: flex;
  flex: 1;
  align-items: center;
  gap: 35px;
  height: 56px;
  margin: 0 12px;
  padding: 0 19px 0 27px;
  border-radius: 28px;
  background: #f1f3f4;
}
.omnibox input {
  flex: 1;
  min-width: 0;
  margin-left: -12px;
  border: 0;
  padding: 0;
  background: linear-gradient(90deg, #202124 250px, #6a6d71 250px) text;
  color: transparent;
  font: 28px Inter, "Liberation Sans", sans-serif;
}

/* bookmarks bar */
.bookmarks {
  display: flex;
  flex: none;
  align-items: center;
  gap: 32px;
  height: 66px;
  padding: 0 38px 10px 28px;
  border-bottom: 2px solid #dcdcdc;
}
.bookmarks a {
  display: flex;
  align-items: center;
  gap: 16px;
  color: #3c4043;
  text-decoration: none;
  white-space: nowrap;
}
.mark-gmail {
  padding: 2px;
}
.overflow {
  margin-left: auto;
}

/* course page */
.page {
  flex: 1;
  min-height: 0;
  overflow: hidden;
  background: #eee;
  color: #000;
  font-family: "Liberation Sans", sans-serif;
  font-size: 34px;
  line-height: 48px;
}
.site-nav {
  position: relative;
  z-index: 1;
  padding: 0 110px;
  border-bottom: 2px solid #e7e7e7;
  background: #f8f8f8;
}
.site-nav-inner {
  display: flex;
  align-items: center;
  height: 104px;
  padding: 0 29px 2px;
  border-bottom: 4px solid #000;
  font-size: 34px;
  line-height: 40px;
}
.brand {
  margin-right: 60px;
  padding: 0 6px 0 3px;
  background: #fdfdfd;
  color: #3030a6;
  font-size: 36px;
  font-style: italic;
  text-decoration: none;
}
.dropdown {
  margin-right: 60px;
  color: #777;
  font-weight: 700;
}
.dropdown::after {
  margin-left: 4px;
  border: 8px solid transparent;
  border-top-color: #777;
  border-bottom: 0;
  content: "";
}
article {
  margin: -16px 152px 0 280px;
}
p {
  margin: 0;
}
h2 {
  margin: 42px 0 19px;
  padding: 0 48px;
  border-radius: 24px;
  background: #abcdef;
  font: 51px/79px "DejaVu Sans", sans-serif;
}
table {
  margin: 20px 0 5px;
  border-collapse: collapse;
}
th {
  padding: 15px 14px 14px;
  border: 2px solid #000;
  background: #dab1eb;
}
td {
  padding: 0;
  text-align: center;
}

/* dock */
.dock {
  position: relative;
  display: flex;
  flex: none;
  height: 108px;
  margin: 0 72px 10px;
  padding: 0 2px 0 4px;
  border: 2px solid rgba(255, 255, 255, 0.2);
  border-radius: 34px;
  background: linear-gradient(90deg, #59687b, #576d84 40%, #597e90 60%, #60807f 85%, #5f747b);
  box-shadow: 0 0 40px rgba(0, 0, 0, 0.3);
}
.tile {
  position: relative;
  flex: 1;
  align-items: flex-start;
  justify-content: center;
  padding-top: 14px;
}
.dock-icon {
  width: 70px;
  height: 70px;
  overflow: visible;
}
.petals rect {
  mix-blend-mode: multiply;
}
.tile.running::after {
  position: absolute;
  bottom: 2px;
  left: calc(50% - 4px);
  width: 8px;
  height: 8px;
  border-radius: 50%;
  background: #05060c;
  content: "";
}
.divider {
  flex: 0 0 42px;
  height: 80px;
  margin-top: 12px;
  background: linear-gradient(#23485a, #23485a) center / 2px 100% no-repeat;
}
.badge {
  position: absolute;
  top: 4px;
  right: 2px;
  width: 32px;
  height: 32px;
  border-radius: 50%;
  background: #f3403f;
  color: #fff;
  font-size: 19px;
  line-height: 32px;
  text-align: center;
}
</style>
